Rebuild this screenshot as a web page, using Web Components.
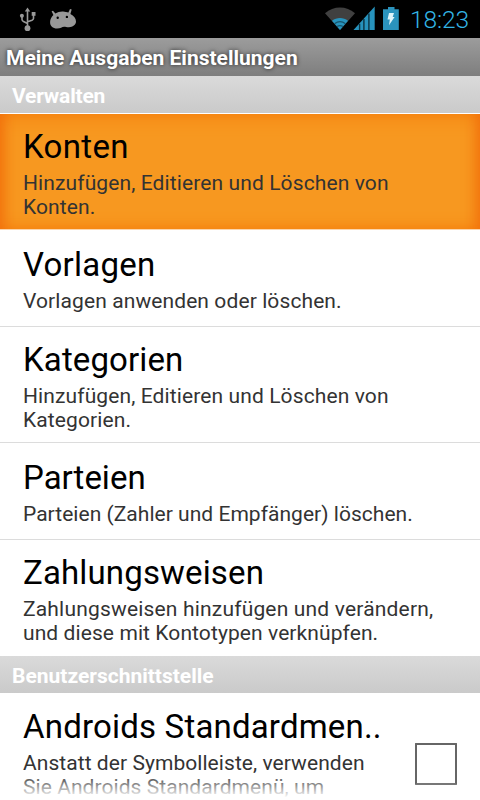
<!DOCTYPE html>
<html lang="de">
<head>
<meta charset="utf-8">
<title>Meine Ausgaben Einstellungen</title>
<style>
html,body{margin:0;height:100%;overflow:hidden;background:#fff}
body{font-family:Roboto,"Noto Sans",sans-serif}
</style>
</head>
<body>
<settings-screen></settings-screen>
<script>
function define(name, html) {
  const template = document.createElement('template');
  template.innerHTML = html;
  customElements.define(name, class extends HTMLElement {
    constructor() {
      super();
      this.attachShadow({mode: 'open'}).append(template.content.cloneNode(true));
    }
  });
}

define('status-bar', `
<style>
:host{display:flex;height:38px;background:#000;color:#33b5e5;box-sizing:border-box}
svg{display:block;width:400px;height:38px;flex:none}
time{flex:1;font-size:24.500px;line-height:40px;letter-spacing:-.1px;padding-left:10px;white-space:nowrap;font-weight:350}
</style>
<svg viewBox="0 0 400 38">
  <g stroke="#999" fill="none" stroke-width="1.6">
    <path d="M27.500 11V27M22 16.500v3q0 1.300 1.500 2l4 2M33.500 15v3.500q0 1-1.500 1.700l-4.500 1.500"/>
  </g>
  <g fill="#999">
    <path d="M27.500 7.500l2.700 4h-5.400z"/><circle cx="27.500" cy="28.200" r="2.900"/><circle cx="21.900" cy="15.700" r="2"/><rect x="31.700" y="12" width="3.800" height="3.800"/>
  </g>
  <path fill="#999" fill-rule="evenodd" d="M51.600 11.200l1.400-.5 2.400 2.900C57.500 12 60 11.300 63 11.400c2.200.1 4 .6 5.400 1.200l1.600-3.700 1.700.5-1.300 4.500c3.500 2.100 5.600 4.300 5.600 7.600 0 3.500-3.400 5.600-7 5.700-2.400 0-3.600-.5-4.900-.5-2.200 0-3.500 1.900-7 1.900-4.300 0-7.200-2.600-7-6.500.1-3 1.300-5.400 3.300-7.200zM57.700 16.600a1.200 1.200 0 1 0 0 2.400 1.200 1.200 0 0 0 0-2.400zM66.900 15.700a1.200 1.200 0 1 0 0 2.400 1.200 1.200 0 0 0 0-2.400z"/>
  <path fill="#404040" d="M340 30L325 13.200C333.500 5.600 346.500 5.600 355 13.200z"/>
  <path fill="#2793bd" d="M340 30L332 20.800C336.500 17 343.500 17 348 20.800z"/>
  <path fill="none" stroke="#17536b" stroke-width="1.200" d="M334.500 23.700C338 21 342 21 345.500 23.700M337 26.600C339 25.200 341 25.200 343 26.600"/>
  <path fill="#2793bd" d="M374.700 6.500V30H353.500z"/>
  <path stroke="#0c3443" stroke-width="1.400" d="M359.600 23.800V30M363.900 19V30M368.900 13.500V30"/>
  <path fill="#2b93bd" d="M388 7h6.500v2.200h4.300V30H383V9.200h5z"/>
  <path fill="#dff4fa" d="M389 13h5l-1.300 3.900h1.900L389 25.300l.8-5.800h-2.300z"/>
</svg>
<time>18:23</time>`);

define('title-bar', `
<style>
:host{display:block;height:38px;padding-left:6px;box-sizing:border-box;background:linear-gradient(#9c9c9c,#7e7e7e);
color:#fff;font-weight:700;font-size:21px;line-height:41px;white-space:nowrap;text-shadow:0 0 4px rgba(0,0,0,.75)}
</style><slot></slot>`);

define('section-header', `
<style>
:host{display:block;height:37px;padding-left:12px;box-sizing:border-box;background:linear-gradient(#dadada,#cacaca);
color:#fff;font-weight:700;font-size:21px;line-height:41px;white-space:nowrap;letter-spacing:var(--track,0)}
</style><slot></slot>`);

define('preference-item', `
<style>
:host{display:flex;align-items:flex-start;justify-content:space-between;box-sizing:border-box;min-height:97px;padding:11px 23px 10px;border-bottom:1px solid #dcdcdc;background:#fff}
:host([single]){padding-top:13px}
:host([selected]){margin-top:1px;background:#f79820;border-bottom-color:#fbd6ad;
box-shadow:inset 16px 0 14px -12px #f2700c,inset -16px 0 14px -12px #f2700c,inset 0 12px 16px -8px #f58210,inset 0 -12px 14px -10px #f58210}
.title{font-size:33px;line-height:44px;height:46px;color:#000;white-space:nowrap;letter-spacing:var(--title-track,0)}
.summary{font-size:21px;line-height:24px;color:#333;white-space:nowrap;letter-spacing:var(--track,0)}
::slotted([slot=widget]){align-self:center}
</style>
<div><div class="title"><slot name="title"></slot></div><div class="summary"><slot></slot></div></div>
<slot name="widget"></slot>`);

define('check-box', `
<style>:host{display:block;width:42px;height:42px;box-sizing:border-box;border:2px solid #666;border-bottom-color:#777;border-radius:1px;background:#fff;flex:none}</style>`);

define('settings-screen', `
<style>
:host{display:flex;flex-direction:column;width:480px;height:800px;overflow:hidden;position:relative;background:#fff}
:host > *{flex:none}
.fade{position:absolute;left:0;right:0;bottom:0;height:26px;background:linear-gradient(rgba(255,255,255,0),#fff 92%)}
.last{border:0;height:140px;padding-top:12px}
check-box{position:relative;z-index:1}
</style>
<status-bar></status-bar>
<title-bar>Meine Ausgaben Einstellungen</title-bar>
<section-header style="--track:-.2px">Verwalten</section-header>
<preference-item selected style="--title-track:.35px;--track:.11px"><span slot="title">Konten</span>Hinzufügen, Editieren und Löschen von<br>Konten.</preference-item>
<preference-item single style="--title-track:.25px;--track:.1px"><span slot="title">Vorlagen</span>Vorlagen anwenden oder löschen.</preference-item>
<preference-item style="--title-track:.12px;--track:.11px"><span slot="title">Kategorien</span>Hinzufügen, Editieren und Löschen von<br>Kategorien.</preference-item>
<preference-item single style="--track:.03px"><span slot="title">Parteien</span>Parteien (Zahler und Empfänger) löschen.</preference-item>
<preference-item style="border:0;--title-track:.15px;--track:.09px"><span slot="title">Zahlungsweisen</span><span style="letter-spacing:.18px">Zahlungsweisen hinzufügen und verändern,</span><br>und diese mit Kontotypen verknüpfen.</preference-item>
<section-header style="margin-top:1px">Benutzerschnittstelle</section-header>
<preference-item class="last" style="--title-track:.19px;--track:.06px"><span slot="title">Androids Standardmen..</span>Anstatt der Symbolleiste, verwenden<br>Sie Androids Standardmenü, um<check-box slot="widget"></check-box></preference-item>
<div class="fade"></div>`);
</script>
</body>
</html>
